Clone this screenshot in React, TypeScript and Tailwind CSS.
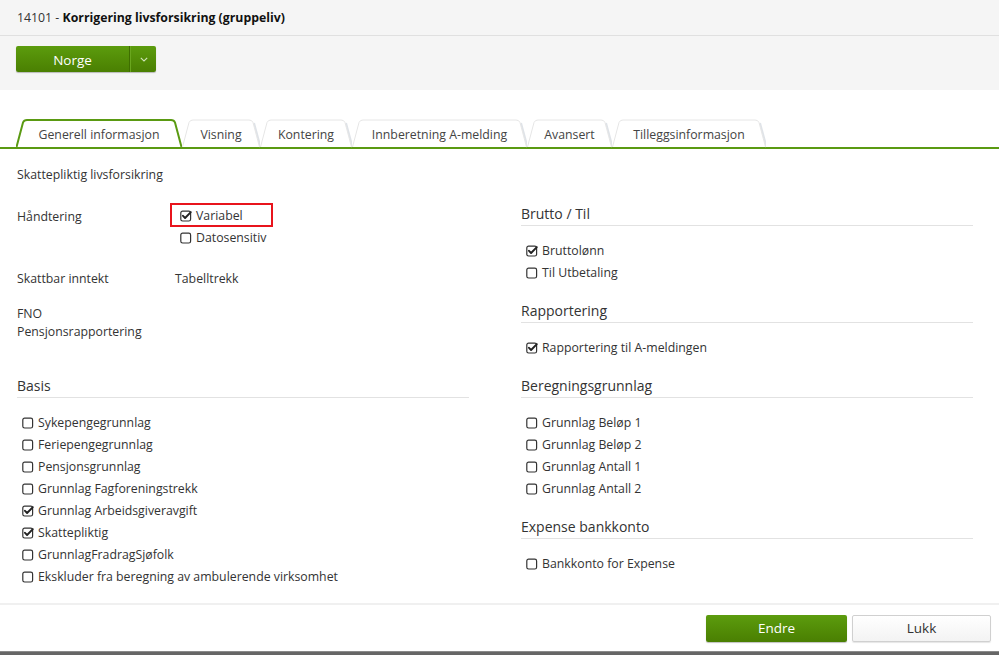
import React from "react";

const FONT = { fontFamily: '"Open Sans", "Noto Sans", Arial, sans-serif' };

function Box({ checked }: { checked?: boolean }) {
  return (
    <svg width="12" height="12" viewBox="0 0 12 12" className="shrink-0">
      <rect x="0.8" y="1.2" width="9.8" height="9.8" rx="1.8" fill="none" stroke="#333" strokeWidth="1.2" />
      {checked && (
        <path d="M3 5.8 L5.1 8 L10.8 2.2" fill="none" stroke="#222" strokeWidth="1.9" strokeLinecap="round" strokeLinejoin="round" />
      )}
    </svg>
  );
}

function Item({ label, checked }: { label: string; checked?: boolean }) {
  return (
    <div className="flex h-[22px] items-center gap-[4px] pl-[5px] text-[12.3px] text-[#333]">
      <Box checked={checked} />
      <span>{label}</span>
    </div>
  );
}

function Section({ title, items, first }: { title: string; items: [string, boolean][]; first?: boolean }) {
  return (
    <div className={first ? "" : "mt-[17px]"}>
      <div className="border-b border-[#e2e2e2] pb-[1px] text-[14px] leading-[20px] text-[#333]">{title}</div>
      <div className="mt-[14px]">
        {items.map(([l, c]) => (
          <Item key={l} label={l} checked={c} />
        ))}
      </div>
    </div>
  );
}

function Tab({ label, width, active }: { label: string; width: number; active?: boolean }) {
  const h = 28;
  const w = width;
  const d = `M0.5,${h} L7,3.5 Q8,1 11,1 L${w - 11},1 Q${w - 8},1 ${w - 7},3.5 L${w - 0.5},${h}`;
  return (
    <div className="relative flex h-[28px] shrink-0 items-center justify-center" style={{ width }}>
      <svg className="absolute inset-0" width={w} height={h + 1} viewBox={`0 0 ${w} ${h + 1}`}>
        {!active && <path d={d + " Z"} fill="#fff" stroke="none" />}
        {!active && (
          <path d={`M${w - 6},4 L${w + 0.5},${h}`} fill="none" stroke="#dfe3e8" strokeWidth="2" />
        )}
        <path
          d={d}
          fill="#fff"
          stroke={active ? "#5a9a12" : "#e6e6e6"}
          strokeWidth={active ? 2 : 1}
        />
      </svg>
      <span className="relative top-[2px] text-[12.3px] text-[#444]">{label}</span>
    </div>
  );
}

export default function App() {
  return (
    <div className="flex h-[655px] w-[999px] flex-col overflow-hidden bg-white" style={FONT}>
      {/* Header */}
      <div className="flex h-[36px] items-center border-b border-[#e0e0e0] bg-[#f5f5f5] pl-[17px] pt-[1px] text-[12.3px] text-[#333]">
        <span>14101 -&nbsp;</span>
        <span className="font-bold text-[#111]">Korrigering livsforsikring (gruppeliv)</span>
      </div>
      <div className="h-[54px] bg-[#f5f5f5] pl-[16px] pt-[10px]">
        <div className="flex h-[26px] w-[140px] overflow-hidden rounded-[2px] bg-gradient-to-b from-[#5c9c0e] to-[#4a7f02] shadow-[0_1px_1px_rgba(0,0,0,0.25)]">
          <div className="flex w-[113px] items-center justify-center pt-[2px] text-[13.5px] text-white">Norge</div>
          <div className="w-[1px] bg-[#3f6e00]" />
          <div className="w-[1px] bg-[#6aa61e]" />
          <div className="flex flex-1 items-center justify-center pt-[1px]">
            <svg width="8" height="5" viewBox="0 0 8 5">
              <path d="M0.8 0.8 L4 4 L7.2 0.8" fill="none" stroke="#cfe3b8" strokeWidth="1.1" />
            </svg>
          </div>
        </div>
      </div>

      {/* Tabs */}
      <div className="mt-[29px]">
        <div className="flex items-end pl-[16px]">
          <Tab label="Generell informasjon" width={166} active />
          <Tab label="Visning" width={78} />
          <Tab label="Kontering" width={92} />
          <Tab label="Innberetning A-melding" width={175} />
          <Tab label="Avansert" width={85} />
          <Tab label="Tilleggsinformasjon" width={154} />
        </div>
        <div className="h-[2px] bg-[#5a9a12]" />
      </div>

      {/* Content */}
      <div className="flex-1 pl-[17px] pr-[26px] text-[12.3px] text-[#333]">
        <div className="mt-[16px] leading-[20px]">Skattepliktig livsforsikring</div>
        <div className="mt-[19px] grid grid-cols-2 gap-[52px]">
          {/* Left column */}
          <div className="pt-[1px]">
            <div className="flex">
              <div className="w-[158px] pt-[1px] leading-[22px]">Håndtering</div>
              <div>
                <div className="relative">
                  <Item label="Variabel" checked />
                  <div className="absolute left-[-5px] top-[-2px] h-[24px] w-[103px] border-2 border-[#e8141c]" />
                </div>
                <Item label="Datosensitiv" />
              </div>
            </div>
            <div className="mt-[19px] flex leading-[22px]">
              <div className="w-[158px]">Skattbar inntekt</div>
              <div>Tabelltrekk</div>
            </div>
            <div className="mt-[15px] leading-[18px]">
              <div>FNO</div>
              <div>Pensjonsrapportering</div>
            </div>
            <div className="mt-[35px]">
              <Section
                first
                title="Basis"
                items={[
                  ["Sykepengegrunnlag", false],
                  ["Feriepengegrunnlag", false],
                  ["Pensjonsgrunnlag", false],
                  ["Grunnlag Fagforeningstrekk", false],
                  ["Grunnlag Arbeidsgiveravgift", true],
                  ["Skattepliktig", true],
                  ["GrunnlagFradragSjøfolk", false],
                  ["Ekskluder fra beregning av ambulerende virksomhet", false],
                ]}
              />
            </div>
          </div>
          {/* Right column */}
          <div>
            <Section first title="Brutto / Til" items={[["Bruttolønn", true], ["Til Utbetaling", false]]} />
            <Section title="Rapportering" items={[["Rapportering til A-meldingen", true]]} />
            <Section
              title="Beregningsgrunnlag"
              items={[
                ["Grunnlag Beløp 1", false],
                ["Grunnlag Beløp 2", false],
                ["Grunnlag Antall 1", false],
                ["Grunnlag Antall 2", false],
              ]}
            />
            <Section title="Expense bankkonto" items={[["Bankkonto for Expense", false]]} />
          </div>
        </div>
      </div>

      {/* Footer */}
      <div className="flex h-[48px] justify-end gap-[5px] border-t-2 border-[#f0f0f0] pr-[8px] pt-[10px]">
        <div className="flex h-[27px] w-[141px] items-center justify-center rounded-[2px] bg-gradient-to-b from-[#5c9c0e] to-[#4a7f02] text-[13.5px] text-white shadow-[0_1px_1px_rgba(0,0,0,0.25)]">
          Endre
        </div>
        <div className="flex h-[27px] w-[139px] items-center justify-center rounded-[2px] border border-[#d0d0d0] bg-gradient-to-b from-white to-[#f3f3f3] text-[13.5px] text-[#333] shadow-[0_1px_1px_rgba(0,0,0,0.1)]">
          Lukk
        </div>
      </div>
      <div className="h-[4px] border-t border-[#8a8a8a] bg-[#666]" />
    </div>
  );
}
